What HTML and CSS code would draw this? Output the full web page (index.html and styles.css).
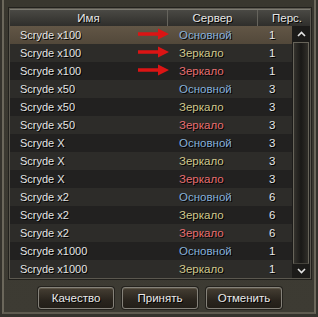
FILE: index.html
```html
<!DOCTYPE html>
<html lang="ru">
<head>
<meta charset="utf-8">
<link rel="stylesheet" href="styles.css">
</head>
<body>
<div class="window">
  <div class="frame">
    <div class="panel">
      <div class="header">
        <div class="h-name">Имя</div>
        <div class="h-server">Сервер</div>
        <div class="h-pers">Перс.</div>
      </div>
      <div class="body">
        <div class="rows">
          <div class="row selected"><div class="c-name">Scryde x100<svg class="arrow" viewBox="0 0 32 12" width="32" height="12"><path d="M0 4.2 H20 V0.5 L31 6 L20 11.5 V7.8 H0 Z" fill="#dc1414"/></svg></div><div class="c-server blue">Основной</div><div class="c-pers">1</div></div>
          <div class="row"><div class="c-name">Scryde x100<svg class="arrow" viewBox="0 0 32 12" width="32" height="12"><path d="M0 4.2 H20 V0.5 L31 6 L20 11.5 V7.8 H0 Z" fill="#dc1414"/></svg></div><div class="c-server gold">Зеркало</div><div class="c-pers">1</div></div>
          <div class="row"><div class="c-name">Scryde x100<svg class="arrow" viewBox="0 0 32 12" width="32" height="12"><path d="M0 4.2 H20 V0.5 L31 6 L20 11.5 V7.8 H0 Z" fill="#dc1414"/></svg></div><div class="c-server red">Зеркало</div><div class="c-pers">1</div></div>
          <div class="row"><div class="c-name">Scryde x50</div><div class="c-server blue">Основной</div><div class="c-pers">3</div></div>
          <div class="row"><div class="c-name">Scryde x50</div><div class="c-server gold">Зеркало</div><div class="c-pers">3</div></div>
          <div class="row"><div class="c-name">Scryde x50</div><div class="c-server red">Зеркало</div><div class="c-pers">3</div></div>
          <div class="row"><div class="c-name">Scryde X</div><div class="c-server blue">Основной</div><div class="c-pers">3</div></div>
          <div class="row"><div class="c-name">Scryde X</div><div class="c-server gold">Зеркало</div><div class="c-pers">3</div></div>
          <div class="row"><div class="c-name">Scryde X</div><div class="c-server red">Зеркало</div><div class="c-pers">3</div></div>
          <div class="row"><div class="c-name">Scryde x2</div><div class="c-server blue">Основной</div><div class="c-pers">6</div></div>
          <div class="row"><div class="c-name">Scryde x2</div><div class="c-server gold">Зеркало</div><div class="c-pers">6</div></div>
          <div class="row"><div class="c-name">Scryde x2</div><div class="c-server red">Зеркало</div><div class="c-pers">6</div></div>
          <div class="row"><div class="c-name">Scryde x1000</div><div class="c-server blue">Основной</div><div class="c-pers">1</div></div>
          <div class="row"><div class="c-name">Scryde x1000</div><div class="c-server gold">Зеркало</div><div class="c-pers">1</div></div>
        </div>
        <div class="scroll">
          <div class="s-btn"><svg viewBox="0 0 9 6" width="9" height="6"><polyline points="1,5 4.5,1.5 8,5" fill="none" stroke="#e4e4e4" stroke-width="1.6"/></svg></div>
          <div class="track"></div>
          <div class="s-btn down"><svg viewBox="0 0 9 6" width="9" height="6"><polyline points="1,1 4.5,4.5 8,1" fill="none" stroke="#e4e4e4" stroke-width="1.6"/></svg></div>
        </div>
      </div>
    </div>
    <div class="buttons">
      <div class="btn">Качество</div>
      <div class="btn">Принять</div>
      <div class="btn">Отменить</div>
    </div>
  </div>
</div>
</body>
</html>
```
FILE: styles.css
```css
* { box-sizing: border-box; }
html, body { margin: 0; padding: 0; }
body {
  background: #35332d;
  font-family: "Liberation Sans", Arial, sans-serif;
  font-size: 11px;
  color: #e2e2e2;
}
.window {
  width: 318px;
  height: 317px;
  padding: 0 2px 3px 2px;
  background: #34322c;
}
.frame {
  height: 314px;
  border-left: 2px solid #6b675b;
  border-right: 2px solid #6b675b;
  border-bottom: 2px solid #5f5b50;
  background: linear-gradient(#39372f, #3d3b33);
  padding: 8px 3px 0 5px;
}
.panel {
  border: 1px solid #5b584f;
  background: #1f1e1c;
  box-shadow: 0 0 0 1px #22211d;
}
.header {
  display: flex;
  height: 17px;
  background: linear-gradient(#4a4944, #2f2e2b);
  border-top: 1px solid #7d7b73;
}
.header > div {
  display: flex;
  align-items: center;
  justify-content: center;
  line-height: 16px;
  font-size: 11.5px;
  text-shadow: 1px 1px 0 #000;
  color: #e6e6e6;
}
.h-name { width: 158px; border-right: 1px solid #66645d; }
.h-server { width: 90px; border-right: 1px solid #66645d; }
.h-pers { flex: 1; padding-left: 6px; }
.body {
  display: flex;
  height: 252px;
}
.rows { width: 282px; }
.row {
  display: flex;
  height: 18px;
  align-items: center;
  background: #222120;
  text-shadow: 1px 1px 0 #000;
}
.row:nth-child(even) { background: #2d2c29; }
.row.selected { background: linear-gradient(#625646, #52483a); }
.c-name {
  position: relative;
  width: 158px;
  padding-left: 10px;
  color: #e4e4e4;
}
.arrow {
  position: absolute;
  left: 128px;
  top: -1px;
}
.c-server { width: 90px; padding-left: 11px; font-size: 11.5px; }
.c-pers { flex: 1; padding-left: 11px; color: #e8e8e8; font-size: 11.5px; }
.blue { color: #86b0da; }
.gold { color: #d0c78c; }
.red { color: #e66e70; }
.scroll {
  flex: 1;
  display: flex;
  flex-direction: column;
  align-items: center;
  background: #1c1b19;
  padding: 0 1px;
}
.s-btn {
  height: 16px;
  width: 100%;
  display: flex;
  align-items: center;
  justify-content: center;
}
.s-btn.down { height: 14px; }
.track {
  height: 222px;
  width: 16px;
  border: 1px solid #67645a;
  border-bottom-color: #45433c;
  background: linear-gradient(90deg, #34322d, #1a1917 50%, #302e29);
}
.buttons {
  display: flex;
  justify-content: center;
  gap: 8px;
  margin-top: 8px;
}
.btn {
  width: 76px;
  height: 22px;
  border: 1px solid #85827a;
  border-radius: 3px;
  background: linear-gradient(#453e33, #2a251e 60%, #221e18);
  box-shadow: inset 0 1px 0 #5c5547, 0 0 0 1px #24221d;
  display: flex;
  align-items: center;
  justify-content: center;
  color: #eaeaea;
  font-size: 11.5px;
  text-shadow: 1px 1px 0 #000;
}
```
